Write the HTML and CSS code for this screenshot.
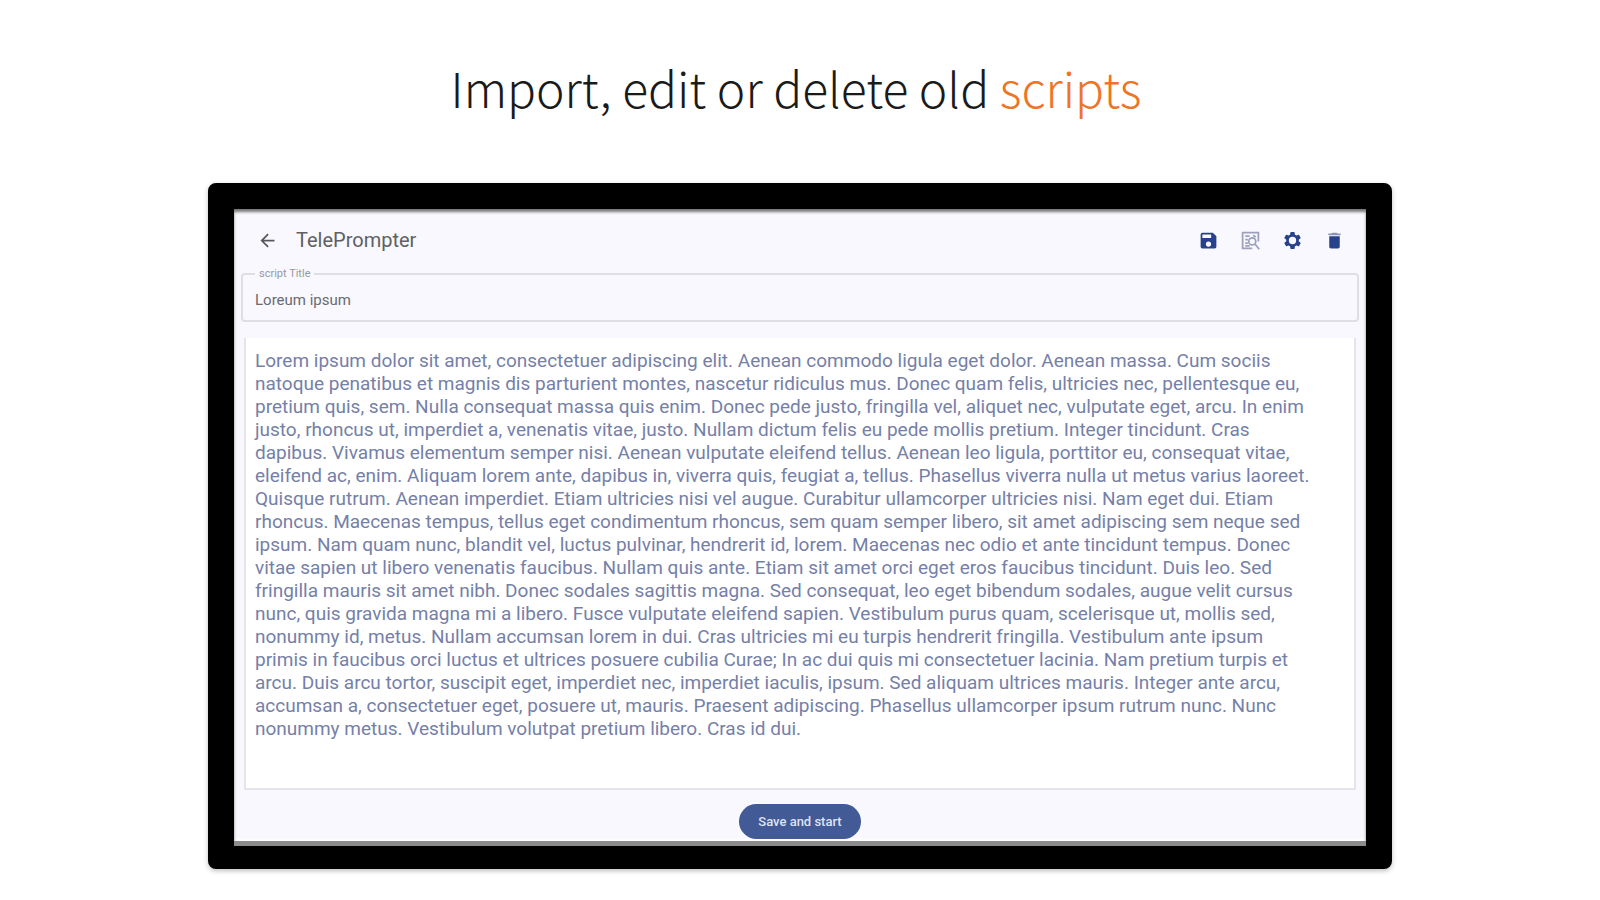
FILE: index.html
```html
<!DOCTYPE html>
<html lang="en">
<head>
<meta charset="utf-8">
<title>TelePrompter</title>
<link rel="stylesheet" href="styles.css">
</head>
<body>
<main class="page">
  <h1 class="headline">Import, edit or delete old <span class="accent">scripts</span></h1>
  <section class="device">
    <form class="screen">
      <header class="toolbar">
        <button class="icon-button" type="button" aria-label="Back">
          <svg class="icon icon-back" viewBox="0 0 24 24"><path d="M20 11H7.83l5.59-5.59L12 4l-8 8 8 8 1.41-1.41L7.83 13H20z"/></svg>
        </button>
        <h2 class="app-title">TelePrompter</h2>
        <div class="actions">
          <button class="icon-button" type="button" aria-label="Save">
            <svg class="icon" viewBox="0 0 24 24"><path d="M17 3H5a2 2 0 0 0-2 2v14a2 2 0 0 0 2 2h14a2 2 0 0 0 2-2V7zm-5 16a3 3 0 1 1 0-6 3 3 0 0 1 0 6zm3-10H5V5h10z"/></svg>
          </button>
          <button class="icon-button" type="button" aria-label="Find in script">
            <svg class="icon icon-find" viewBox="0 0 24 24"><path d="M21 13V3H3v18h11M6 7h5M6 11h3M6 15h3M6 18h5M15 6l3 2" /><circle cx="14" cy="13" r="4"/><path d="M17 16l5 6"/></svg>
          </button>
          <button class="icon-button" type="button" aria-label="Settings">
            <svg class="icon" viewBox="0 0 24 24"><path d="M19.14 12.94c.04-.3.06-.61.06-.94s-.02-.64-.07-.94l2.03-1.58a.49.49 0 0 0 .12-.61l-1.92-3.32a.49.49 0 0 0-.59-.22l-2.39.96a7 7 0 0 0-1.62-.94l-.36-2.54a.48.48 0 0 0-.48-.41h-3.84a.47.47 0 0 0-.47.41l-.36 2.54c-.59.24-1.13.57-1.62.94l-2.39-.96a.48.48 0 0 0-.59.22L2.74 8.87a.47.47 0 0 0 .12.61l2.03 1.58a6 6 0 0 0 0 1.88l-2.03 1.58a.49.49 0 0 0-.12.61l1.92 3.32c.12.22.37.29.59.22l2.39-.96c.5.38 1.03.7 1.62.94l.36 2.54c.05.24.24.41.48.41h3.84c.24 0 .44-.17.47-.41l.36-2.54c.59-.24 1.13-.56 1.62-.94l2.39.96c.22.08.47 0 .59-.22l1.92-3.32a.47.47 0 0 0-.12-.61zM12 16.2a4.2 4.2 0 1 1 0-8.4 4.2 4.2 0 0 1 0 8.4z"/></svg>
          </button>
          <button class="icon-button" type="button" aria-label="Delete">
            <svg class="icon" viewBox="0 0 24 24"><path d="M6 19a2 2 0 0 0 2 2h8a2 2 0 0 0 2-2V7H6z"/><path class="bin-lid" d="M19 4h-3.500l-1-1h-5l-1 1H5v2h14z"/></svg>
          </button>
        </div>
      </header>
      <fieldset class="title-field">
        <legend><label for="script-title">script Title</label></legend>
        <input id="script-title" class="title-input" type="text" value="Loreum ipsum">
      </fieldset>
      <textarea class="script" aria-label="Script" spellcheck="false" rows="19">Lorem ipsum dolor sit amet, consectetuer adipiscing elit. Aenean commodo ligula eget dolor. Aenean massa. Cum sociis
natoque penatibus et magnis dis parturient montes, nascetur ridiculus mus. Donec quam felis, ultricies nec, pellentesque eu,
pretium quis, sem. Nulla consequat massa quis enim. Donec pede justo, fringilla vel, aliquet nec, vulputate eget, arcu. In enim
justo, rhoncus ut, imperdiet a, venenatis vitae, justo. Nullam dictum felis eu pede mollis pretium. Integer tincidunt. Cras
dapibus. Vivamus elementum semper nisi. Aenean vulputate eleifend tellus. Aenean leo ligula, porttitor eu, consequat vitae,
eleifend ac, enim. Aliquam lorem ante, dapibus in, viverra quis, feugiat a, tellus. Phasellus viverra nulla ut metus varius laoreet.
Quisque rutrum. Aenean imperdiet. Etiam ultricies nisi vel augue. Curabitur ullamcorper ultricies nisi. Nam eget dui. Etiam
rhoncus. Maecenas tempus, tellus eget condimentum rhoncus, sem quam semper libero, sit amet adipiscing sem neque sed
ipsum. Nam quam nunc, blandit vel, luctus pulvinar, hendrerit id, lorem. Maecenas nec odio et ante tincidunt tempus. Donec
vitae sapien ut libero venenatis faucibus. Nullam quis ante. Etiam sit amet orci eget eros faucibus tincidunt. Duis leo. Sed
fringilla mauris sit amet nibh. Donec sodales sagittis magna. Sed consequat, leo eget bibendum sodales, augue velit cursus
nunc, quis gravida magna mi a libero. Fusce vulputate eleifend sapien. Vestibulum purus quam, scelerisque ut, mollis sed,
nonummy id, metus. Nullam accumsan lorem in dui. Cras ultricies mi eu turpis hendrerit fringilla. Vestibulum ante ipsum
primis in faucibus orci luctus et ultrices posuere cubilia Curae; In ac dui quis mi consectetuer lacinia. Nam pretium turpis et
arcu. Duis arcu tortor, suscipit eget, imperdiet nec, imperdiet iaculis, ipsum. Sed aliquam ultrices mauris. Integer ante arcu,
accumsan a, consectetuer eget, posuere ut, mauris. Praesent adipiscing. Phasellus ullamcorper ipsum rutrum nunc. Nunc
nonummy metus. Vestibulum volutpat pretium libero. Cras id dui.</textarea>
      <button class="save" type="submit">Save and start</button>
    </form>
  </section>
</main>
</body>
</html>
```
FILE: styles.css
```css
* { box-sizing: border-box; }

body {
  margin: 0;
  background: #fff;
  font-family: Roboto, "Liberation Sans", sans-serif;
}

.page {
  display: flex;
  flex-direction: column;
  align-items: center;
  gap: 60px;
  padding: 51px 0 28px;
}

.headline {
  margin: 0;
  padding-right: 8px;
  color: #1a1a1a;
  font: 300 48px/72px "Noto Sans CJK SC", "Noto Sans", sans-serif;
}

.accent { color: #ee7426; }

.device {
  width: 74%;
  border: 26px solid #000;
  border-bottom-width: 23px;
  border-radius: 8px;
  background: #000;
  box-shadow: 0 2px 5px rgba(0, 0, 0, .25);
}

.screen {
  display: flex;
  flex-direction: column;
  margin: 0;
  padding: 4px 7px 2px;
  border-bottom: 5px solid #8c8c8c;
  background: #f8f8fe;
  box-shadow: inset 0 3px 3px #777, inset 0 0 2px 2px #fff;
}

.toolbar {
  display: flex;
  align-items: center;
  height: 54px;
  padding: 0 8px 0 9px;
}

.icon-button {
  display: grid;
  place-items: center;
  width: 34px;
  height: 34px;
  padding: 0;
  border: 0;
  background: none;
}

.icon {
  width: 21px;
  height: 21px;
  fill: #27428a;
}

.icon-back { fill: #58585c; }

.icon-find {
  fill: none;
  stroke: #9ba1bd;
  stroke-width: 2;
}

.bin-lid { fill: #8b92b3; }

.app-title {
  margin: 0;
  padding-left: 12px;
  color: #5f5f64;
  font-size: 20px;
  font-weight: 400;
}

.actions {
  display: flex;
  gap: 8px;
  margin-left: auto;
}

.title-field {
  margin: 0;
  padding: 0 12px;
  border: 2px solid #dedee4;
  border-radius: 4px;
}

.title-field legend {
  padding: 0 4px;
  color: #98989e;
  font-size: 11px;
  line-height: 14px;
}

.title-input {
  width: 100%;
  height: 39px;
  padding: 0 0 2px;
  border: 0;
  background: none;
  color: #6a6a70;
  font: 15px Roboto, sans-serif;
}

.script {
  margin: 16px 3px 14px;
  padding: 11px 9px 2px;
  border: 2px solid #e4e4ea;
  border-top: 0;
  background: #fff;
  color: #7580a8;
  font: 19px/23px Roboto, sans-serif;
  overflow: hidden;
  resize: none;
}

.save {
  align-self: center;
  width: 122px;
  height: 35px;
  padding: 0;
  border: 0;
  border-radius: 18px;
  background: #425a96;
  color: #dde3f3;
  font: 500 13px Roboto, sans-serif;
}
```
